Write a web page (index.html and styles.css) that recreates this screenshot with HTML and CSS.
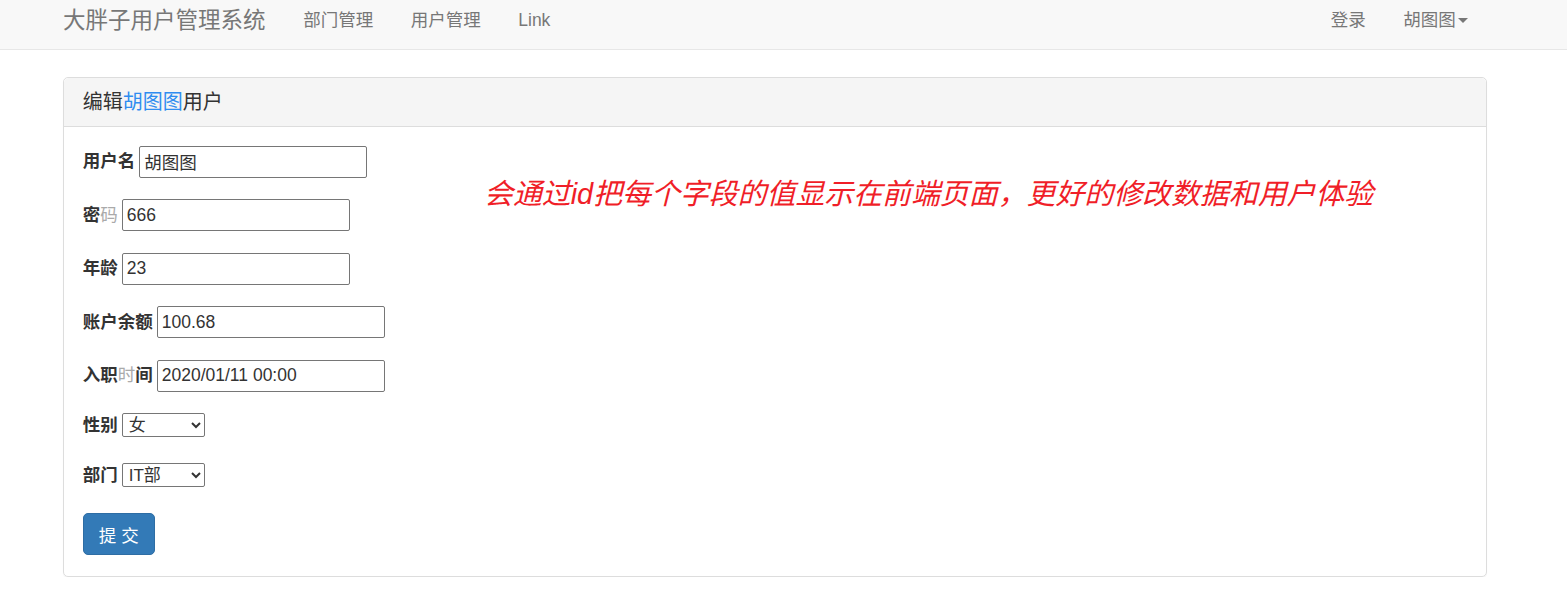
FILE: index.html
```html
<!DOCTYPE html>
<html lang="zh-CN">
<head>
    <meta charset="UTF-8">
    <meta name="viewport" content="width=device-width, initial-scale=1.0">
    <title>编辑用户</title>
    <link rel="stylesheet" href="styles.css">
</head>
<body>
    <nav class="navbar">
        <div class="container nav-inner">
            <a class="brand" href="#">大胖子用户管理系统</a>
            <ul class="nav">
                <li><a href="#">部门管理</a></li>
                <li><a href="#">用户管理</a></li>
                <li><a href="#">Link</a></li>
            </ul>
            <ul class="nav nav-right">
                <li><a href="#">登录</a></li>
                <li><a href="#">胡图图<span class="caret"></span></a></li>
            </ul>
        </div>
    </nav>

    <div class="container">
        <div class="panel">
            <div class="panel-heading">编辑<span class="name">胡图图</span>用户</div>
            <div class="panel-body">
                <form class="user-form">
                    <div class="form-row">
                        <label>用户名</label>
                        <input type="text" value="胡图图">
                    </div>
                    <div class="form-row">
                        <label>密<span class="dim">码</span></label>
                        <input type="text" value="666">
                    </div>
                    <div class="form-row">
                        <label>年龄</label>
                        <input type="text" value="23">
                    </div>
                    <div class="form-row">
                        <label>账户余额</label>
                        <input type="text" value="100.68">
                    </div>
                    <div class="form-row">
                        <label>入职<span class="dim">时</span>间</label>
                        <input type="text" value="2020/01/11 00:00">
                    </div>
                    <div class="form-row select-row">
                        <label>性别</label>
                        <select>
                            <option>男</option>
                            <option selected>女</option>
                        </select>
                    </div>
                    <div class="form-row select-row">
                        <label>部门</label>
                        <select>
                            <option selected>IT部</option>
                            <option>销售部</option>
                        </select>
                    </div>
                    <button type="submit" class="btn">提 交</button>
                </form>
                <p class="note">会通过id把每个字段的值显示在前端页面，更好的修改数据和用户体验</p>
            </div>
        </div>
    </div>
</body>
</html>
```

FILE: styles.css
```css
body {
    margin: 0;
    font-family: "Liberation Sans", Arial, "Noto Sans CJK SC", sans-serif;
    font-size: 17.5px;
    line-height: 25px;
    color: #333;
    background: #fff;
}
a {
    text-decoration: none;
}
.container {
    width: 1424px;
    margin-left: 63px;
}

/* 导航栏 */
.navbar {
    height: 49px;
    background-color: #f8f8f8;
    border-bottom: 1px solid #e7e7e7;
}
.nav-inner {
    display: flex;
    align-items: center;
    height: 40px;
}
.brand {
    font-size: 22.5px;
    color: #777;
    padding-right: 19px;
}
.nav {
    display: flex;
    list-style: none;
    margin: 0;
    padding: 0;
}
.nav a {
    display: block;
    padding: 0 18.75px;
    color: #777;
}
.nav-right {
    margin-left: auto;
}
.caret {
    display: inline-block;
    width: 0;
    height: 0;
    margin-left: 2.5px;
    vertical-align: middle;
    border-top: 5px solid #777;
    border-left: 5px solid transparent;
    border-right: 5px solid transparent;
}

/* 面板 */
.panel {
    margin-top: 27px;
    border: 1px solid #ddd;
    border-radius: 5px;
    box-shadow: 0 1px 1px rgba(0, 0, 0, .05);
}
.panel-heading {
    padding: 12px 18.75px;
    font-size: 20px;
    line-height: 24px;
    background-color: #f5f5f5;
    border-bottom: 1px solid #ddd;
    border-radius: 5px 5px 0 0;
}
.panel-heading .name {
    color: #2f8df0;
}
.panel-body {
    position: relative;
    padding: 18.75px 18.75px 21px;
}

/* 表单 */
.form-row {
    display: flex;
    align-items: center;
    height: 32px;
    margin-bottom: 21.5px;
}
.form-row label {
    font-weight: bold;
    margin-right: 4px;
}
.form-row .dim {
    color: #aaa;
    font-weight: normal;
}
.form-row input {
    box-sizing: border-box;
    width: 228px;
    height: 32px;
    padding: 0 4px;
    border: 1px solid #767676;
    border-radius: 2px;
    font-family: inherit;
    font-size: 17.5px;
    color: #333;
}
.select-row {
    height: 24px;
    margin-bottom: 26px;
}
.form-row:nth-child(6) {
    margin-top: 1px;
}
.form-row select {
    box-sizing: border-box;
    width: 83px;
    height: 24px;
    padding: 0 2px;
    border: 1px solid #767676;
    border-radius: 2px;
    background: #fff;
    font-family: inherit;
    font-size: 17px;
    color: #333;
}
.btn {
    width: 72px;
    height: 42px;
    padding: 0;
    border: 1px solid #2e6da4;
    border-radius: 5px;
    background-color: #337ab7;
    color: #fff;
    font-family: inherit;
    font-size: 17.5px;
    cursor: pointer;
}

/* 红色说明文字 */
.note {
    position: absolute;
    left: 420px;
    top: 49px;
    margin: 0;
    font-size: 28.9px;
    line-height: 36px;
    font-style: italic;
    color: #f01e28;
}
```
